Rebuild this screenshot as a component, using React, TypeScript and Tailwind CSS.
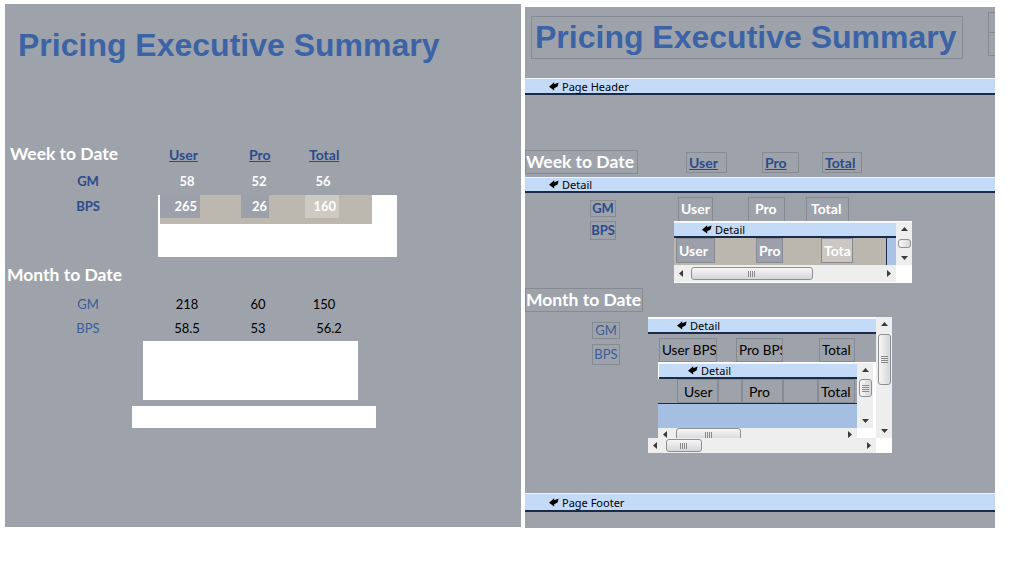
import React from 'react'

const lato = "font-[family-name:Lato,sans-serif]"
const arial = "font-[family-name:'Liberation_Sans',Arial,sans-serif]"
const noto = "font-[family-name:'Noto_Sans',sans-serif]"
const box = 'border border-[#858a93]'

function SectionArrow() {
  return (
    <svg width="10" height="9" viewBox="0 0 10 9" className="shrink-0">
      <path d="M0 4.8 L5.2 0.3 L5.2 2.3 L9.6 0.6 L8.6 4.6 L5.2 6.2 L5.2 8.6 Z" fill="#000" />
    </svg>
  )
}

function Band({ label, className }: { label: string; className: string }) {
  return (
    <div className={`flex items-center shrink-0 bg-[#c3dbf7] border-t border-t-[#eef5fd] border-b-2 border-b-[#1b2a47] ${noto} text-[11px] text-black ${className}`}>
      <SectionArrow />
      <span className="ml-[3px] leading-none">{label}</span>
    </div>
  )
}

function Tri({ dir }: { dir: 'up' | 'down' | 'left' | 'right' }) {
  if (dir === 'up') return <svg width="7" height="4" viewBox="0 0 7 4"><path d="M0 4 L3.5 0 L7 4 Z" fill="#3a3a3a" /></svg>
  if (dir === 'down') return <svg width="7" height="4" viewBox="0 0 7 4"><path d="M0 0 L7 0 L3.5 4 Z" fill="#3a3a3a" /></svg>
  if (dir === 'left') return <svg width="4" height="7" viewBox="0 0 4 7"><path d="M4 0 L4 7 L0 3.5 Z" fill="#3a3a3a" /></svg>
  return <svg width="4" height="7" viewBox="0 0 4 7"><path d="M0 0 L4 3.5 L0 7 Z" fill="#3a3a3a" /></svg>
}

function HScroll({ width, height, thumbStart, thumbLen }: { width: number; height: number; thumbStart: number; thumbLen: number }) {
  return (
    <div className="flex items-center shrink-0 bg-[#eeeeee]" style={{ width, height }}>
      <div className="w-[14px] flex justify-center"><Tri dir="left" /></div>
      <div className="shrink-0" style={{ width: thumbStart - 14 }} />
      <div className="h-[13px] shrink-0 rounded-[3px] border border-[#8f9092] bg-linear-to-b from-[#f6f6f6] to-[#d4d6d9] flex items-center justify-center" style={{ width: thumbLen }}>
        <svg width="8" height="6" viewBox="0 0 8 6"><path d="M0.5 0 V6 M2.5 0 V6 M4.5 0 V6 M6.5 0 V6" stroke="#8a8a8a" strokeWidth="1" /></svg>
      </div>
      <div className="flex-1" />
      <div className="w-[14px] flex justify-center"><Tri dir="right" /></div>
    </div>
  )
}

function VScroll({ width, height, thumbStart, thumbLen }: { width: number; height: number; thumbStart: number; thumbLen: number }) {
  return (
    <div className="flex flex-col items-center shrink-0 bg-[#eeeeee]" style={{ width, height }}>
      <div className="h-[14px] flex items-center"><Tri dir="up" /></div>
      <div className="shrink-0" style={{ height: thumbStart - 14 }} />
      <div className="w-[13px] shrink-0 rounded-[3px] border border-[#8f9092] bg-linear-to-r from-[#f6f6f6] to-[#d4d6d9] flex items-center justify-center" style={{ height: thumbLen }}>
        {thumbLen > 14 && (
          <svg width="7" height="7" viewBox="0 0 7 7"><path d="M0 0.5 H7 M0 2.5 H7 M0 4.5 H7 M0 6.5 H7" stroke="#8a8a8a" strokeWidth="1" /></svg>
        )}
      </div>
      <div className="flex-1" />
      <div className="h-[14px] flex items-center"><Tri dir="down" /></div>
    </div>
  )
}

// left side: report view
function ReportView() {
  return (
    <div className={`w-[516px] h-[523px] shrink-0 bg-[#9ea3ab] flex flex-col ${lato}`}>
      <div className={`${arial} font-bold text-[32px] leading-[32px] text-[#3b63a5] pl-[13px] mt-[25px]`}>
        Pricing Executive Summary
      </div>

      {/* Week to Date */}
      <div className="flex items-center h-[20px] mt-[83px] pl-[5px]">
        <div className="w-[159px] text-white font-bold text-[17.5px]">Week to Date</div>
        <div className="w-[80px] text-[#2c4b8a] font-bold text-[14px] underline">User</div>
        <div className="w-[60px] text-[#2c4b8a] font-bold text-[14px] underline">Pro</div>
        <div className="text-[#2c4b8a] font-bold text-[14px] underline">Total</div>
      </div>
      <div className="flex items-center h-[20px] mt-[8px] pl-[53px] font-bold text-[13px]">
        <div className="w-[60px] text-center text-[#2c4b8a]">GM</div>
        <div className="w-[40px] ml-[49px] text-center text-white">58</div>
        <div className="w-[40px] ml-[32px] text-center text-white">52</div>
        <div className="w-[40px] ml-[24px] text-center text-white">56</div>
      </div>
      <div className="flex items-start mt-[3px] pl-[53px] font-bold text-[13px]">
        <div className="w-[60px] h-[23px] leading-[23px] text-center text-[#2c4b8a]">BPS</div>
        <div className="ml-[40px] w-[239px] h-[62px] bg-white">
          <div className="ml-[2px] w-[212px] h-[29px] bg-[#bcb8b0] flex items-start text-white">
            <div className="w-[40px] h-[23px] bg-[#9ba0aa] text-right pr-[3px] leading-[23px]">265</div>
            <div className="w-[28px] h-[23px] ml-[41px] bg-[#9ba0aa] text-right pr-[2px] leading-[23px]">26</div>
            <div className="w-[34px] h-[23px] ml-[36px] bg-[#cdc9c3] text-right pr-[3px] leading-[23px]">160</div>
          </div>
        </div>
      </div>

      {/* Month to Date */}
      <div className="flex items-center h-[20px] mt-[8px] pl-[2px]">
        <div className="text-white font-bold text-[17.5px]">Month to Date</div>
      </div>
      <div className="flex items-center h-[20px] mt-[10px] pl-[53px] text-[13px]">
        <div className="w-[60px] text-center text-[#3b5c98]">GM</div>
        <div className="w-[40px] ml-[49px] text-center text-black">218</div>
        <div className="w-[40px] ml-[31px] text-center text-black">60</div>
        <div className="w-[40px] ml-[26px] text-center text-black">150</div>
      </div>
      <div className="flex items-center h-[20px] mt-[4px] pl-[53px] text-[13px]">
        <div className="w-[60px] text-center text-[#3b5c98]">BPS</div>
        <div className="w-[40px] ml-[49px] text-center text-black">58.5</div>
        <div className="w-[40px] ml-[31px] text-center text-black">53</div>
        <div className="w-[40px] ml-[31px] text-center text-black">56.2</div>
      </div>
      <div className="ml-[138px] mt-[2px] w-[215px] h-[59px] bg-white" />
      <div className="ml-[127px] mt-[6px] w-[244px] h-[22px] bg-white" />
    </div>
  )
}

function SubreportWeek() {
  return (
    <div className="w-[238px] h-[62px] bg-white flex flex-col">
      <div className="flex mt-[1px]">
        <div className="w-[222px] flex flex-col">
          <Band label="Detail" className="h-[16px] pl-[28px]" />
          <div className="h-[27px] flex">
            <div className={`w-[212px] bg-[#bbb7af] flex items-start font-bold text-[14px] text-white ${lato}`}>
              <div className={`w-[39px] h-[25px] ml-[2px] bg-[#9ba0aa] ${box} pl-[2px] leading-[23px]`}>User</div>
              <div className={`w-[27px] h-[25px] ml-[41px] bg-[#9ba0aa] ${box} pl-[2px] leading-[23px]`}>Pro</div>
              <div className={`w-[32px] h-[25px] ml-[38px] bg-[#cbc7c1] ${box} pl-[2px] leading-[23px] overflow-hidden whitespace-nowrap`}>Tota</div>
            </div>
            <div className="w-[1px] bg-[#1b2a47]" />
            <div className="flex-1 bg-[#a9c3e6]" />
          </div>
        </div>
        <VScroll width={16} height={43} thumbStart={17} thumbLen={9} />
      </div>
      <div className="flex">
        <HScroll width={222} height={17} thumbStart={17} thumbLen={122} />
        <div className="w-[16px] h-[17px] bg-white" />
      </div>
    </div>
  )
}

function SubreportMonth() {
  return (
    <div className="w-[244px] h-[136px] bg-white flex flex-col overflow-hidden">
      <div className="flex h-[121px]">
        <div className="w-[228px] flex flex-col overflow-hidden">
          <Band label="Detail" className="h-[16px] pl-[29px] mt-[1px]" />
          <div className={`h-[104px] bg-[#9ea3ab] flex flex-col ${lato} text-[14px] text-black`}>
            <div className="flex items-start mt-[4px] text-[13.5px]">
              <div className={`w-[58px] h-[24px] ml-[11px] ${box} pl-[2px] leading-[22px] whitespace-nowrap overflow-hidden`}>User BPS</div>
              <div className={`w-[47px] h-[24px] ml-[19px] ${box} pl-[2px] leading-[22px] whitespace-nowrap overflow-hidden`}>Pro BPS</div>
              <div className={`w-[36px] h-[24px] ml-[36px] ${box} pl-[2px] leading-[22px]`}>Total</div>
            </div>
            <div className="ml-[10px] w-[218px] h-[76px] bg-white flex flex-col shrink-0">
              <div className="flex mt-[1px]">
                <div className="w-[199px] flex flex-col">
                  <Band label="Detail" className="h-[16px] pl-[29px] ml-[1px]" />
                  <div className="h-[25px] bg-[#9ea3ab] border-b border-[#1b2a47] flex items-stretch">
                    <div className={`w-[41px] ml-[19px] ${box} pl-[6px] leading-[23px]`}>User</div>
                    <div className={`w-[24px] ${box}`} />
                    <div className={`w-[41px] ${box} pl-[6px] leading-[23px]`}>Pro</div>
                    <div className={`w-[35px] ${box}`} />
                    <div className={`w-[37px] ${box} pl-[2px] leading-[23px]`}>Total</div>
                  </div>
                  <div className="h-[24px] bg-[#a5bfe3]" />
                </div>
                <VScroll width={16} height={65} thumbStart={16} thumbLen={18} />
              </div>
              <HScroll width={199} height={13} thumbStart={18} thumbLen={65} />
            </div>
          </div>
        </div>
        <VScroll width={16} height={121} thumbStart={17} thumbLen={51} />
      </div>
      <div className="flex">
        <HScroll width={228} height={15} thumbStart={18} thumbLen={36} />
        <div className="w-[16px] h-[15px] bg-white" />
      </div>
    </div>
  )
}

// right side: design view
function DesignView() {
  return (
    <div className={`w-[470px] h-[521px] mt-[3px] shrink-0 bg-[#9ea3ab] flex flex-col overflow-hidden ${lato}`}>
      {/* report header */}
      <div className="h-[71px] shrink-0 flex items-start pt-[9px]">
        <div className={`ml-[6px] w-[432px] h-[43px] shrink-0 border border-[#858a93] pl-[3px] pt-[4px] ${arial} font-bold text-[32px] leading-[32px] text-[#3b63a5] whitespace-nowrap`}>
          Pricing Executive Summary
        </div>
        <div className="ml-[25px] -mt-[4px] flex flex-col shrink-0">
          <div className="w-[14px] h-[21px] border border-[#858a93]" />
          <div className="w-[14px] h-[24px] border border-[#858a93] -mt-[1px]" />
        </div>
      </div>

      <Band label="Page Header" className="h-[17px] pl-[24px]" />

      {/* page header section */}
      <div className="h-[82px] shrink-0 flex items-start pt-[55px]">
        <div className={`w-[113px] h-[24px] ${box} text-white font-bold text-[17.5px] leading-[22px] whitespace-nowrap overflow-hidden`}>Week to Date</div>
        <div className={`w-[41px] h-[21px] ml-[48px] mt-[2px] ${box} text-[#2c4b8a] font-bold text-[14px] underline leading-[19px] pl-[2px]`}>User</div>
        <div className={`w-[37px] h-[21px] ml-[35px] mt-[2px] ${box} text-[#2c4b8a] font-bold text-[14px] underline leading-[19px] pl-[2px]`}>Pro</div>
        <div className={`w-[40px] h-[21px] ml-[23px] mt-[2px] ${box} text-[#2c4b8a] font-bold text-[14px] underline leading-[19px] pl-[2px]`}>Total</div>
      </div>

      <Band label="Detail" className="h-[16px] pl-[24px]" />

      {/* detail section */}
      <div className="h-[300px] shrink-0 flex flex-col">
        <div className="flex items-start pt-[4px]">
          <div className="ml-[65px] flex flex-col font-bold text-[13px] text-[#2c4b8a]">
            <div className={`w-[26px] h-[17px] mt-[3px] ${box} text-center leading-[15px]`}>GM</div>
            <div className={`w-[26px] h-[19px] mt-[4px] ${box} text-center leading-[17px]`}>BPS</div>
          </div>
          <div className="ml-[58px] flex flex-col">
            <div className="h-[24px] flex items-start font-bold text-[14px] text-white">
              <div className={`w-[35px] h-[26px] ml-[4px] ${box} pl-[2px] leading-[22px]`}>User</div>
              <div className={`w-[37px] h-[26px] ml-[35px] ${box} pl-[6px] leading-[22px]`}>Pro</div>
              <div className={`w-[43px] h-[26px] ml-[21px] ${box} pl-[4px] leading-[22px]`}>Total</div>
            </div>
            <div className="relative">
              <SubreportWeek />
            </div>
          </div>
        </div>

        <div className={`w-[118px] h-[24px] mt-[5px] ${box} text-white font-bold text-[17.5px] leading-[22px] whitespace-nowrap overflow-hidden`}>Month to Date</div>

        <div className="flex items-start mt-[5px]">
          <div className="ml-[67px] flex flex-col text-[13px] text-[#3b5c98]">
            <div className={`w-[28px] h-[17px] mt-[5px] ${box} text-center leading-[15px]`}>GM</div>
            <div className={`w-[28px] h-[21px] mt-[5px] ${box} text-center leading-[19px]`}>BPS</div>
          </div>
          <div className="ml-[28px]">
            <SubreportMonth />
          </div>
        </div>
      </div>

      <Band label="Page Footer" className="h-[19px] pl-[24px]" />
      <div className="flex-1" />
    </div>
  )
}

export default function App() {
  return (
    <div className="w-[1017px] h-[567px] bg-white flex items-start pl-[5px] pt-[4px]">
      <ReportView />
      <div className="w-[4px] shrink-0" />
      <DesignView />
    </div>
  )
}
